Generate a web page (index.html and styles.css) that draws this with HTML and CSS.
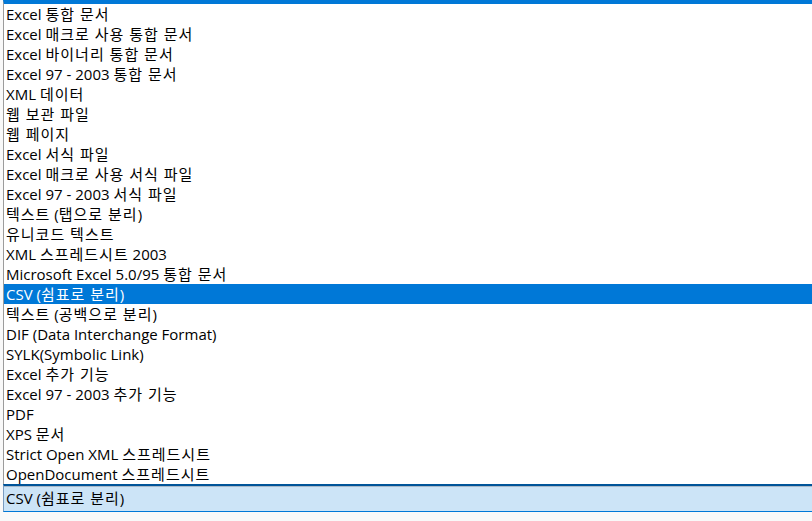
FILE: index.html
```html
<!DOCTYPE html>
<html>
	<head>
		<meta charset="UTF-8">
		<title>파일 형식</title>
		<link rel="stylesheet" href="styles.css">
	</head>
	<body>
		<div class="dropdown">
			<ul class="list">
				<li>Excel <span class="ko">통합 문서</span></li>
				<li>Excel <span class="ko">매크로 사용 통합 문서</span></li>
				<li>Excel <span class="ko">바이너리 통합 문서</span></li>
				<li>Excel 97 - 2003 <span class="ko">통합 문서</span></li>
				<li>XML <span class="ko">데이터</span></li>
				<li><span class="ko">웹 보관 파일</span></li>
				<li><span class="ko">웹 페이지</span></li>
				<li>Excel <span class="ko">서식 파일</span></li>
				<li>Excel <span class="ko">매크로 사용 서식 파일</span></li>
				<li>Excel 97 - 2003 <span class="ko">서식 파일</span></li>
				<li><span class="ko">텍스트</span> (<span class="ko">탭으로 분리</span>)</li>
				<li><span class="ko">유니코드 텍스트</span></li>
				<li>XML <span class="ko">스프레드시트</span> 2003</li>
				<li>Microsoft Excel 5.0/95 <span class="ko">통합 문서</span></li>
				<li class="active">CSV (<span class="ko">쉼표로 분리</span>)</li>
				<li><span class="ko">텍스트</span> (<span class="ko">공백으로 분리</span>)</li>
				<li>DIF (Data Interchange Format)</li>
				<li>SYLK(Symbolic Link)</li>
				<li>Excel <span class="ko">추가 기능</span></li>
				<li>Excel 97 - 2003 <span class="ko">추가 기능</span></li>
				<li>PDF</li>
				<li>XPS <span class="ko">문서</span></li>
				<li>Strict Open XML <span class="ko">스프레드시트</span></li>
				<li>OpenDocument <span class="ko">스프레드시트</span></li>
			</ul>
			<div class="combo">CSV (<span class="ko">쉼표로 분리</span>)</div>
		</div>
	</body>
</html>
```
FILE: styles.css
```css
html,body{
	margin: 0;
	padding: 0;
	background: #f9f9f9;
}
.dropdown{
	width: 812px;
	height: 521px;
	font: 15px/20px "Open Sans", "Noto Sans CJK KR", sans-serif;
	color: #000000;
}
.ko{
	letter-spacing: 1px;/*맑은 고딕 폭에 맞춤*/
}
.list{
	list-style: none;
	margin: 0;
	padding: 0;
	border-top: 4px solid #0078d7;
	border-left: 1px solid #9c9c9c;
	margin-left: 3px;
	background: #ffffff;
}
.list li{
	height: 20px;
	padding-left: 2px;
	white-space: nowrap;
}
.list li.active{
	background: #0078d7;
	color: #ffffff;
}
.combo{
	margin-left: 3px;
	height: 25px;
	line-height: 25px;
	padding-left: 2px;
	background: #cce4f7;
	border-top: 2px solid #005499;
	border-left: 1px solid #7a9cc0;
	border-bottom: 1px solid #0078d7;
	box-shadow: inset 0 1px 0 #a9b9c9;
}
```
